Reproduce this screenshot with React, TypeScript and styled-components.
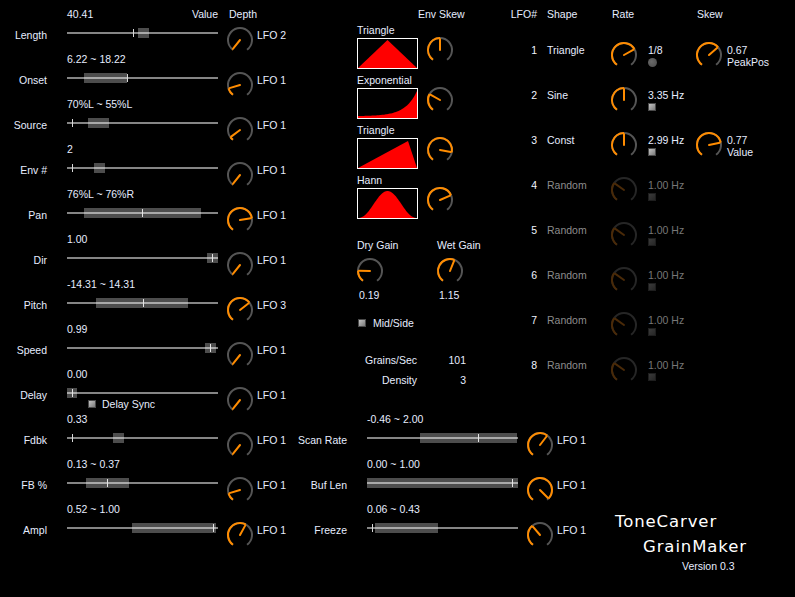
import React from "react";
import styled, { createGlobalStyle } from "styled-components";

const ORANGE = "#ff8c00";
const TEXT = "#e6edff";

const GlobalStyle = createGlobalStyle`
  html, body { margin: 0; padding: 0; background: #000; }
  body {
    font-family: "Liberation Sans", Arial, sans-serif;
    font-size: 10.5px;
    color: ${TEXT};
  }
  * { box-sizing: border-box; }
`;

const Page = styled.div`
  width: 795px;
  height: 597px;
  background: #000;
  display: flex;
  overflow: hidden;
`;

/* ---------- Knob ---------- */

const KnobSvg = styled.svg`
  display: block;
  overflow: visible;
  flex: none;
`;

function Knob({ value, dim }: { value: number; dim?: boolean }) {
  const c = 13;
  const r = 12;
  const s = -144;
  const e = 144;
  const a = s + (e - s) * value;
  const pt = (deg: number, rad: number) => {
    const t = (deg * Math.PI) / 180;
    return [c + rad * Math.sin(t), c - rad * Math.cos(t)];
  };
  const arc = (a0: number, a1: number) => {
    const [x0, y0] = pt(a0, r);
    const [x1, y1] = pt(a1, r);
    const large = a1 - a0 > 180 ? 1 : 0;
    return `M ${x0.toFixed(2)} ${y0.toFixed(2)} A ${r} ${r} 0 ${large} 1 ${x1.toFixed(2)} ${y1.toFixed(2)}`;
  };
  const [px, py] = pt(a, r - 1);
  const on = dim ? "#4a2a08" : ORANGE;
  const off = dim ? "#262626" : "#555";
  return (
    <KnobSvg width={26} height={26} viewBox="0 0 26 26">
      <path d={arc(s, e)} fill="none" stroke={off} strokeWidth={2} />
      {a - s > 0.5 && <path d={arc(s, a)} fill="none" stroke={on} strokeWidth={2} />}
      <line x1={c} y1={c} x2={px} y2={py} stroke={on} strokeWidth={2} strokeLinecap="round" />
    </KnobSvg>
  );
}

/* ---------- Slider ---------- */

const SliderTrack = styled.div`
  position: relative;
  width: 151px;
  height: 18px;
  flex: none;
  &::before {
    content: "";
    position: absolute;
    left: 0;
    right: 0;
    top: 11px;
    height: 2px;
    background: #858585;
  }
`;

const SliderBar = styled.div`
  position: absolute;
  top: 7px;
  height: 10px;
  background: rgba(255, 255, 255, 0.3);
`;

const SliderTick = styled.div`
  position: absolute;
  top: 8px;
  width: 1px;
  height: 8px;
  background: #d8d8d8;
`;

function Slider({ bar, tick }: { bar: [number, number]; tick: number }) {
  return (
    <SliderTrack>
      <SliderTick style={{ left: tick }} />
      <SliderBar style={{ left: bar[0], width: bar[1] - bar[0] + 1 }} />
    </SliderTrack>
  );
}

/* ---------- Checkbox ---------- */

const CheckSquare = styled.span<{ $dim?: boolean }>`
  display: inline-block;
  width: 8px;
  height: 8px;
  flex: none;
  border: 1px solid ${(p) => (p.$dim ? "#1e1e1e" : "#4a4a4a")};
  background: ${(p) =>
    p.$dim
      ? "linear-gradient(135deg, #3a3a3a, #262626)"
      : "linear-gradient(135deg, #c4c4c4, #7a7a7a)"};
`;

const Led = styled.span`
  display: inline-block;
  width: 9px;
  height: 9px;
  border-radius: 50%;
  flex: none;
  background: radial-gradient(circle at 40% 40%, #6a6a6a, #4a4a4a);
`;

/* ---------- Parameter rows ---------- */

const RowGrid = styled.div<{ $labelWidth: number }>`
  display: grid;
  grid-template-columns: ${(p) => p.$labelWidth}px 20px 151px 9px 26px 4px auto;
  grid-template-rows: 14px 31px;
  height: 45px;
  flex: none;
`;

const ValueLine = styled.div`
  grid-column: 3;
  grid-row: 1;
  display: flex;
  justify-content: space-between;
  line-height: 14px;
  white-space: nowrap;
`;

const DepthHeader = styled.div`
  grid-column: 5 / span 3;
  grid-row: 1;
  padding-left: 2px;
  line-height: 14px;
  white-space: nowrap;
`;

const ParamLabel = styled.div`
  grid-column: 1;
  grid-row: 2;
  text-align: right;
  line-height: 28px;
  white-space: nowrap;
`;

const SliderCell = styled.div`
  grid-column: 3;
  grid-row: 2;
  display: flex;
  flex-direction: column;
`;

const KnobCell = styled.div`
  grid-column: 5;
  grid-row: 2;
  padding-top: 6px;
`;

const LfoName = styled.div`
  grid-column: 7;
  grid-row: 2;
  line-height: 28px;
  white-space: nowrap;
`;

const SyncRow = styled.div`
  display: flex;
  align-items: center;
  gap: 6px;
  padding-left: 21px;
  height: 10px;
  line-height: 10px;
  white-space: nowrap;
`;

type Param = {
  label: string;
  value: string;
  bar: [number, number];
  tick: number;
  knob: number;
  lfo?: string;
  sync?: boolean;
};

function ParamRow({ p, labelWidth, header }: { p: Param; labelWidth: number; header?: boolean }) {
  return (
    <RowGrid $labelWidth={labelWidth}>
      <ValueLine>
        <span>{p.value}</span>
        {header && <span>Value</span>}
      </ValueLine>
      {header && <DepthHeader>Depth</DepthHeader>}
      <ParamLabel>{p.label}</ParamLabel>
      <SliderCell>
        <Slider bar={p.bar} tick={p.tick} />
        {p.sync && (
          <SyncRow>
            <CheckSquare />
            <span>Delay Sync</span>
          </SyncRow>
        )}
      </SliderCell>
      <KnobCell>
        <Knob value={p.knob} />
      </KnobCell>
      <LfoName>{p.lfo ?? "LFO 1"}</LfoName>
    </RowGrid>
  );
}

const leftParams: Param[] = [
  { label: "Length", value: "40.41", bar: [71, 81], tick: 66, knob: 0.01, lfo: "LFO 2" },
  { label: "Onset", value: "6.22 ~ 18.22", bar: [17, 59], tick: 60, knob: 0.13 },
  { label: "Source", value: "70%L ~ 55%L", bar: [21, 41], tick: 5, knob: 0.06 },
  { label: "Env #", value: "2", bar: [27, 37], tick: 5, knob: 0.01 },
  { label: "Pan", value: "76%L ~ 76%R", bar: [17, 133], tick: 75, knob: 0.78 },
  { label: "Dir", value: "1.00", bar: [140, 150], tick: 145, knob: 0.01 },
  { label: "Pitch", value: "-14.31 ~ 14.31", bar: [29, 120], tick: 76, knob: 0.68, lfo: "LFO 3" },
  { label: "Speed", value: "0.99", bar: [138, 148], tick: 143, knob: 0.01 },
  { label: "Delay", value: "0.00", bar: [0, 9], tick: 5, knob: 0.01, sync: true },
  { label: "Fdbk", value: "0.33", bar: [46, 56], tick: 5, knob: 0.01 },
  { label: "FB %", value: "0.13 ~ 0.37", bar: [19, 61], tick: 40, knob: 0.13 },
  { label: "Ampl", value: "0.52 ~ 1.00", bar: [65, 148], tick: 146, knob: 0.6 },
];

const midParams: Param[] = [
  { label: "Scan Rate", value: "-0.46 ~ 2.00", bar: [53, 149], tick: 111, knob: 0.63 },
  { label: "Buf Len", value: "0.00 ~ 1.00", bar: [0, 150], tick: 145, knob: 0.97 },
  { label: "Freeze", value: "0.06 ~ 0.43", bar: [8, 70], tick: 5, knob: 0.36 },
];

/* ---------- Columns ---------- */

const LeftColumn = styled.div`
  width: 290px;
  flex: none;
  padding-top: 7px;
  display: flex;
  flex-direction: column;
`;

const RightArea = styled.div`
  flex: 1;
  display: flex;
  flex-direction: column;
  padding-top: 7px;
`;

const TopArea = styled.div`
  display: flex;
  height: 405px;
  flex: none;
`;

const EnvColumn = styled.div`
  width: 215px;
  flex: none;
  padding-left: 67px;
  display: flex;
  flex-direction: column;
`;

const EnvHeader = styled.div`
  line-height: 14px;
  padding-left: 61px;
  margin-bottom: 2px;
  white-space: nowrap;
`;

const EnvItem = styled.div`
  display: flex;
  flex-direction: column;
  height: 50px;
  flex: none;
`;

const EnvName = styled.div`
  line-height: 14px;
  height: 14px;
  margin-bottom: 1px;
`;

const EnvBody = styled.div`
  display: flex;
  align-items: flex-start;
  gap: 9px;
  & > svg:last-child { margin-top: -1px; }
`;

const EnvBox = styled.div`
  width: 61px;
  height: 31px;
  border: 1px solid #fff;
  background: #000;
  flex: none;
  & > svg { display: block; }
`;

const GainGroup = styled.div`
  display: flex;
  margin-top: 15px;
`;

const GainCol = styled.div`
  width: 80px;
  flex: none;
  display: flex;
  flex-direction: column;
  & > svg { margin-top: 6px; }
`;

const GainLabel = styled.div`
  line-height: 14px;
  white-space: nowrap;
`;

const GainValue = styled.div`
  line-height: 14px;
  margin-top: 4px;
  padding-left: 2px;
`;

const MidSide = styled.div`
  display: flex;
  align-items: center;
  gap: 7px;
  margin-top: 14px;
  padding-left: 1px;
  height: 14px;
`;

const Stats = styled.div`
  display: grid;
  grid-template-columns: 60px 49px;
  grid-auto-rows: 20px;
  line-height: 20px;
  margin-top: 20px;
  & > span { text-align: right; white-space: nowrap; }
`;

/* ---------- LFO table ---------- */

const LfoTable = styled.div`
  flex: 1;
  display: flex;
  flex-direction: column;
`;

const LfoGrid = styled.div`
  display: grid;
  grid-template-columns: 32px 10px 64px 85px auto;
  align-items: start;
`;

const LfoHeaderRow = styled(LfoGrid)`
  line-height: 14px;
  height: 14px;
  margin-bottom: 21px;
`;

const LfoRowWrap = styled(LfoGrid)`
  height: 45px;
`;

const NumCell = styled.div`
  grid-column: 1;
  text-align: right;
  line-height: 14px;
  margin-top: 1px;
  color: #f2f5ff;
  white-space: nowrap;
`;

const ShapeCell = styled.div<{ $dim?: boolean }>`
  grid-column: 3;
  line-height: 14px;
  margin-top: 1px;
  color: ${(p) => (p.$dim ? "#8c8c8c" : TEXT)};
  white-space: nowrap;
`;

const HeadCell = styled.div<{ $col: number; $pad?: number }>`
  grid-column: ${(p) => p.$col};
  padding-left: ${(p) => p.$pad ?? 0}px;
  text-align: ${(p) => (p.$col === 1 ? "right" : "left")};
  white-space: nowrap;
`;

const RateCell = styled.div`
  grid-column: 4;
  display: flex;
  gap: 11px;
  align-items: flex-start;
`;

const SkewCell = styled.div`
  grid-column: 5;
  display: flex;
  gap: 5px;
  align-items: flex-start;
`;

const RateText = styled.div<{ $dim?: boolean }>`
  display: flex;
  flex-direction: column;
  align-items: flex-start;
  color: ${(p) => (p.$dim ? "#777" : TEXT)};
  & > span:first-child {
    line-height: 14px;
    margin-top: 1px;
    margin-bottom: 1px;
    white-space: nowrap;
  }
`;

const SkewText = styled.div`
  display: flex;
  flex-direction: column;
  line-height: 12px;
  margin-top: 2px;
  white-space: nowrap;
`;

type Lfo = {
  n: number;
  shape: string;
  rate: number;
  rateText: string;
  led?: boolean;
  skew?: { v: number; text: string; sub: string };
  dim?: boolean;
};

const lfos: Lfo[] = [
  { n: 1, shape: "Triangle", rate: 0.71, rateText: "1/8", led: true, skew: { v: 0.67, text: "0.67", sub: "PeakPos" } },
  { n: 2, shape: "Sine", rate: 0.5, rateText: "3.35 Hz" },
  { n: 3, shape: "Const", rate: 0.5, rateText: "2.99 Hz", skew: { v: 0.77, text: "0.77", sub: "Value" } },
  { n: 4, shape: "Random", rate: 0.31, rateText: "1.00 Hz", dim: true },
  { n: 5, shape: "Random", rate: 0.31, rateText: "1.00 Hz", dim: true },
  { n: 6, shape: "Random", rate: 0.31, rateText: "1.00 Hz", dim: true },
  { n: 7, shape: "Random", rate: 0.31, rateText: "1.00 Hz", dim: true },
  { n: 8, shape: "Random", rate: 0.31, rateText: "1.00 Hz", dim: true },
];

function LfoRow({ l }: { l: Lfo }) {
  return (
    <LfoRowWrap>
      <NumCell>{l.n}</NumCell>
      <ShapeCell $dim={l.dim}>{l.shape}</ShapeCell>
      <RateCell>
        <Knob value={l.rate} dim={l.dim} />
        <RateText $dim={l.dim}>
          <span>{l.rateText}</span>
          {l.led ? <Led /> : <CheckSquare $dim={l.dim} />}
        </RateText>
      </RateCell>
      {l.skew && (
        <SkewCell>
          <Knob value={l.skew.v} />
          <SkewText>
            <span>{l.skew.text}</span>
            <span>{l.skew.sub}</span>
          </SkewText>
        </SkewCell>
      )}
    </LfoRowWrap>
  );
}

/* ---------- Envelope shapes ---------- */

function envPath(kind: string): string {
  const W = 59;
  const H = 29;
  const pts: [number, number][] = [];
  if (kind === "tri") {
    return `M0 ${H} L29.5 1 L${W} ${H} Z`;
  }
  if (kind === "skew") {
    return `M0 ${H} L50 2 L${W} ${H} Z`;
  }
  for (let i = 0; i <= 59; i++) {
    const t = i / W;
    let h = 0;
    if (kind === "exp") {
      h = 2 + 25 * ((Math.exp(5 * t) - 1) / (Math.exp(5) - 1));
    } else {
      h = 27 * Math.pow(Math.sin(Math.PI * t), 2.2);
    }
    pts.push([i, H - h]);
  }
  return `M0 ${H} ` + pts.map(([x, y]) => `L${x} ${y.toFixed(2)}`).join(" ") + ` L${W} ${H} Z`;
}

function EnvShape({ kind }: { kind: string }) {
  return (
    <EnvBox>
      <svg width={59} height={29} viewBox="0 0 59 29">
        <path d={envPath(kind)} fill="#ff0000" />
      </svg>
    </EnvBox>
  );
}

const envs = [
  { name: "Triangle", kind: "tri", skew: 0.5 },
  { name: "Exponential", kind: "exp", skew: 0.29 },
  { name: "Triangle", kind: "skew", skew: 0.85 },
  { name: "Hann", kind: "hann", skew: 0.73 },
];

/* ---------- Bottom + branding ---------- */

const BottomArea = styled.div`
  display: flex;
  flex: 1;
`;

const MiddleRows = styled.div`
  width: 302px;
  flex: none;
  display: flex;
  flex-direction: column;
`;

const Branding = styled.div`
  display: flex;
  flex-direction: column;
  padding-top: 97px;
`;

const BrandLine = styled.div<{ $indent: number }>`
  font-family: "DejaVu Sans", Verdana, sans-serif;
  font-size: 16.5px;
  letter-spacing: 0.9px;
  line-height: 25px;
  color: #fff;
  margin-left: ${(p) => p.$indent}px;
  white-space: nowrap;
`;

const Version = styled.div`
  line-height: 14px;
  margin-left: 90px;
  color: ${TEXT};
  white-space: nowrap;
`;

export default function App() {
  return (
    <>
      <GlobalStyle />
      <Page>
        <LeftColumn>
          {leftParams.map((p, i) => (
            <ParamRow key={p.label} p={p} labelWidth={47} header={i === 0} />
          ))}
        </LeftColumn>
        <RightArea>
          <TopArea>
            <EnvColumn>
              <EnvHeader>Env Skew</EnvHeader>
              {envs.map((e, i) => (
                <EnvItem key={i}>
                  <EnvName>{e.name}</EnvName>
                  <EnvBody>
                    <EnvShape kind={e.kind} />
                    <Knob value={e.skew} />
                  </EnvBody>
                </EnvItem>
              ))}
              <GainGroup>
                <GainCol>
                  <GainLabel>Dry Gain</GainLabel>
                  <Knob value={0.19} />
                  <GainValue>0.19</GainValue>
                </GainCol>
                <GainCol>
                  <GainLabel>Wet Gain</GainLabel>
                  <Knob value={0.575} />
                  <GainValue>1.15</GainValue>
                </GainCol>
              </GainGroup>
              <MidSide>
                <CheckSquare />
                <span>Mid/Side</span>
              </MidSide>
              <Stats>
                <span>Grains/Sec</span>
                <span>101</span>
                <span>Density</span>
                <span>3</span>
              </Stats>
            </EnvColumn>
            <LfoTable>
              <LfoHeaderRow>
                <HeadCell $col={1}>LFO#</HeadCell>
                <HeadCell $col={3}>Shape</HeadCell>
                <HeadCell $col={4} $pad={1}>Rate</HeadCell>
                <HeadCell $col={5} $pad={1}>Skew</HeadCell>
              </LfoHeaderRow>
              {lfos.map((l) => (
                <LfoRow key={l.n} l={l} />
              ))}
            </LfoTable>
          </TopArea>
          <BottomArea>
            <MiddleRows>
              {midParams.map((p) => (
                <ParamRow key={p.label} p={p} labelWidth={57} />
              ))}
            </MiddleRows>
            <Branding>
              <BrandLine $indent={23}>ToneCarver</BrandLine>
              <BrandLine $indent={51}>GrainMaker</BrandLine>
              <Version>Version 0.3</Version>
            </Branding>
          </BottomArea>
        </RightArea>
      </Page>
    </>
  );
}
